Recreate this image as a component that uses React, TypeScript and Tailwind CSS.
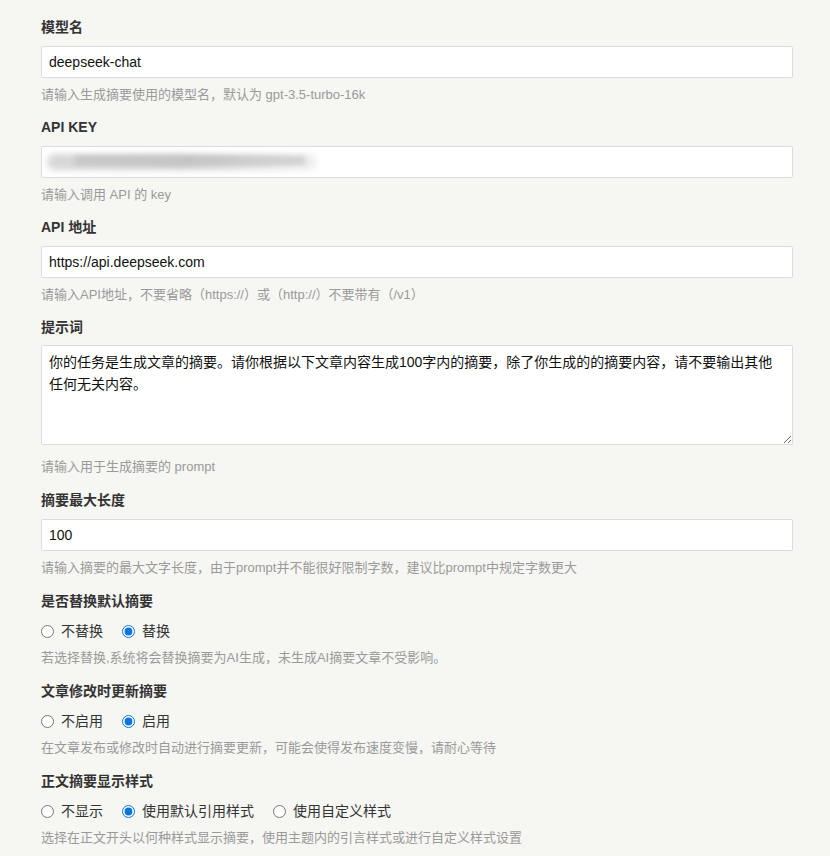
import React from "react";

const font = { fontFamily: '"Liberation Sans", Arial, "Noto Sans CJK SC", sans-serif' };

function Label({ children }: { children: React.ReactNode }) {
  return <div className="text-[14px] leading-[20px] font-bold text-[#333]">{children}</div>;
}

function Help({ children }: { children: React.ReactNode }) {
  return <div className="text-[13px] leading-[18px] text-[#9a9a9a] mt-[8px]">{children}</div>;
}

function TextField({ label, value, help, secret, last }: { label: string; value: string; help: string; secret?: boolean; last?: boolean }) {
  return (
    <div className={last ? "mb-[14px]" : "mb-[13px]"}>
      <Label>{label}</Label>
      <div className="relative mt-[9px]">
        <input
          readOnly
          value={value}
          className="block w-full h-[32px] bg-white border border-[#dcdcde] rounded-[2px] px-[7px] text-[14px] text-[#111] outline-none"
          style={font}
        />
        {secret && (
          <div className="absolute left-[4px] top-[5px] w-[280px] h-[22px] pointer-events-none">
            <div className="absolute left-[2px] top-[3px] w-[270px] h-[16px] rounded-full bg-gradient-to-r from-[#d8d8d8] via-[#cfcfcf] to-[#f0f0f0] blur-[3px]" />
            <div className="absolute left-[30px] top-[5px] w-[230px] h-[9px] bg-gradient-to-r from-[#c8c8c8] via-[#c4c4c4] to-[#d4d4d4] blur-[2px]" />
          </div>
        )}
      </div>
      <Help>{help}</Help>
    </div>
  );
}

function RadioGroup({ label, options, checked, help, name }: { label: string; options: string[]; checked: number; help: string; name: string }) {
  return (
    <div className="mb-[14px]">
      <Label>{label}</Label>
      <div className="mt-[10px] flex items-center gap-[19px] h-[20px]">
        {options.map((o, i) => (
          <label key={o} className="inline-flex items-center gap-[7px] text-[14px] text-[#333] leading-[20px]">
            <input type="radio" name={name} defaultChecked={i === checked} className="m-0 w-[13px] h-[13px] accent-[#0a74e0]" />
            <span>{o}</span>
          </label>
        ))}
      </div>
      <Help>{help}</Help>
    </div>
  );
}

export default function App() {
  return (
    <div className="min-h-[856px] w-[830px] bg-[#f6f6f3] pl-[41px] pr-[37px] pt-[17px]" style={font}>
      <TextField label="模型名" value="deepseek-chat" help="请输入生成摘要使用的模型名，默认为 gpt-3.5-turbo-16k" />
      <TextField label="API KEY" value="" help="请输入调用 API 的 key" secret />
      <TextField label="API 地址" value="https://api.deepseek.com" help="请输入API地址，不要省略（https://）或（http://）不要带有（/v1）" />
      <div className="mb-[14px]">
        <Label>提示词</Label>
        <textarea
          readOnly
          value="你的任务是生成文章的摘要。请你根据以下文章内容生成100字内的摘要，除了你生成的的摘要内容，请不要输出其他任何无关内容。"
          className="block mt-[8px] w-full h-[100px] bg-white border border-[#dcdcde] rounded-[2px] px-[7px] py-[5px] text-[14px] leading-[22px] text-[#111] outline-none"
          style={font}
        />
        <div className="text-[13px] leading-[18px] text-[#9a9a9a] mt-[13px]">请输入用于生成摘要的 prompt</div>
      </div>
      <TextField label="摘要最大长度" value="100" help="请输入摘要的最大文字长度，由于prompt并不能很好限制字数，建议比prompt中规定字数更大" last />
      <RadioGroup name="r1" label="是否替换默认摘要" options={["不替换", "替换"]} checked={1} help="若选择替换,系统将会替换摘要为AI生成，未生成AI摘要文章不受影响。" />
      <RadioGroup name="r2" label="文章修改时更新摘要" options={["不启用", "启用"]} checked={1} help="在文章发布或修改时自动进行摘要更新，可能会使得发布速度变慢，请耐心等待" />
      <RadioGroup name="r3" label="正文摘要显示样式" options={["不显示", "使用默认引用样式", "使用自定义样式"]} checked={1} help="选择在正文开头以何种样式显示摘要，使用主题内的引言样式或进行自定义样式设置" />
    </div>
  );
}
